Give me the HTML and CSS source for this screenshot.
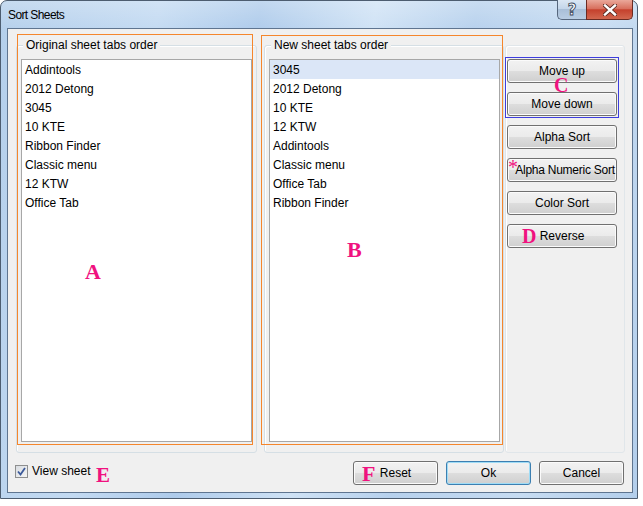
FILE: index.html
```html
<!DOCTYPE html>
<html lang="en">
<head>
    <meta charset="UTF-8">
    <meta name="viewport" content="width=device-width, initial-scale=1.0">
    <title>Sort Sheets</title>
    <link rel="stylesheet" href="styles.css">
</head>
<body>

    <div class="window">
        <div class="titlebar">
            <span class="title">Sort Sheets</span>
            <div class="caption-buttons">
                <span class="cap-btn help">?</span>
                <span class="cap-btn close">
                    <svg width="14" height="12" viewBox="0 0 14 12">
                        <path d="M2 1.5 L12 10.5 M12 1.5 L2 10.5" stroke="#5a2a22" stroke-width="4.2" stroke-linecap="square"/>
                        <path d="M2 1.5 L12 10.5 M12 1.5 L2 10.5" stroke="#fff" stroke-width="2.4" stroke-linecap="square"/>
                    </svg>
                </span>
            </div>
        </div>

        <div class="client">
            <div class="groups">
                <div class="group group-a">
                    <span class="group-label">Original sheet tabs order</span>
                    <ul class="listbox">
                        <li>Addintools</li>
                        <li>2012 Detong</li>
                        <li>3045</li>
                        <li>10 KTE</li>
                        <li>Ribbon Finder</li>
                        <li>Classic menu</li>
                        <li>12 KTW</li>
                        <li>Office Tab</li>
                    </ul>
                </div>

                <div class="group group-b">
                    <span class="group-label">New sheet tabs order</span>
                    <ul class="listbox">
                        <li class="selected">3045</li>
                        <li>2012 Detong</li>
                        <li>10 KTE</li>
                        <li>12 KTW</li>
                        <li>Addintools</li>
                        <li>Classic menu</li>
                        <li>Office Tab</li>
                        <li>Ribbon Finder</li>
                    </ul>
                </div>

                <div class="group group-c">
                    <div class="move-pair">
                        <button class="btn side">Move up</button>
                        <button class="btn side">Move down</button>
                    </div>
                    <button class="btn side">Alpha Sort</button>
                    <button class="btn side tight">Alpha Numeric Sort</button>
                    <button class="btn side">Color Sort</button>
                    <button class="btn side">Reverse</button>
                </div>
            </div>

            <div class="bottom-row">
                <label class="check">
                    <span class="checkbox">
                        <svg width="9" height="9" viewBox="0 0 9 9">
                            <path d="M1 4.5 L3.5 7.5 L8 1" fill="none" stroke="#3c5a9a" stroke-width="1.8"/>
                        </svg>
                    </span>
                    View sheet
                </label>
                <div class="dialog-buttons">
                    <button class="btn wide">Reset</button>
                    <button class="btn wide default">Ok</button>
                    <button class="btn wide">Cancel</button>
                </div>
            </div>

            <!-- annotations drawn over the dialog -->
            <div class="mark mark-a"></div>
            <div class="mark mark-b"></div>
            <span class="tag tag-a">A</span>
            <span class="tag tag-b">B</span>
            <span class="tag tag-c">C</span>
            <span class="tag tag-d">D</span>
            <span class="tag tag-e">E</span>
            <span class="tag tag-f">F</span>
            <span class="tag star">*</span>
        </div>
    </div>

</body>
</html>
```

FILE: styles.css
```css
body {
    margin: 0;
    background-color: #fff;
    font-family: "Liberation Sans", Arial, sans-serif;
    font-size: 12px;
    color: #000;
}

.window {
    box-sizing: border-box;
    width: 638px;
    height: 499px;
    padding: 0 4px 5px 6px;
    border: 1px solid #4d5d70;
    border-radius: 7px 7px 0 0;
    display: flex;
    flex-direction: column;
    background:
        linear-gradient(180deg, rgba(255,255,255,0.25) 0%, rgba(255,255,255,0) 30px),
        linear-gradient(100deg, #b4cfeb 0%, #c3daf2 22%, #aecbeb 36%, #cfe2f5 52%, #b7d1ed 66%, #c7dcf2 84%, #b3ceeb 100%);
}

.titlebar {
    height: 27px;
    display: flex;
    justify-content: space-between;
    align-items: flex-start;
    padding-left: 1px;
}

.title {
    margin-top: 7px;
    font-size: 12px;
    letter-spacing: -0.6px;
    color: #000;
}

.caption-buttons {
    display: flex;
    margin-top: -1px;
}

.cap-btn {
    box-sizing: border-box;
    height: 20px;
    display: flex;
    align-items: center;
    justify-content: center;
    border: 1px solid #56677d;
    border-top: none;
}

.help {
    width: 29px;
    border-right: none;
    border-radius: 0 0 0 5px;
    background: linear-gradient(180deg, #dbe7f4 0%, #c4d6ea 45%, #a9bfd8 50%, #b9cde3 100%);
    font-family: "DejaVu Sans", sans-serif;
    font-weight: bold;
    font-size: 15px;
    color: #fff;
    -webkit-text-stroke: 0.9px #3c4a5c;
}

.close {
    width: 47px;
    border-radius: 0 0 5px 0;
    border-color: #6b2b22;
    background: linear-gradient(180deg, #eaa89a 0%, #d8705e 45%, #c5412d 52%, #d2674f 100%);
}

.client {
    position: relative;
    flex: 1;
    border: 1px solid #5f7590;
    background-color: #f0f0f0;
    padding: 16px 7px 0 8px;
    display: flex;
    flex-direction: column;
}

.groups {
    display: flex;
    height: 408px;
}

.group {
    position: relative;
    box-sizing: border-box;
    height: 408px;
    border: 1px solid #d5dfe5;
    border-radius: 3px;
    box-shadow: inset 1px 1px 0 #fff;
    padding: 13px 4px 10px 4px;
    display: flex;
}

.group-a {
    width: 241px;
}

.group-b {
    width: 240px;
    margin-left: 7px;
    padding-right: 3px;
}

.group-c {
    width: 120px;
    margin-left: 1px;
    padding: 13px 0 0 1px;
    flex-direction: column;
    gap: 9px;
    border-color: #e0e6ea;
}

.group-label {
    position: absolute;
    top: -8px;
    left: 6px;
    padding: 0 3px;
    background-color: #f0f0f0;
    line-height: 14px;
}

.listbox {
    flex: 1;
    margin: 0;
    padding: 0;
    list-style: none;
    background-color: #fff;
    border: 1px solid #a7a7a7;
}

.listbox li {
    box-sizing: border-box;
    height: 19px;
    padding: 2px 0 0 3px;
    line-height: 17px;
}

.listbox li.selected {
    background-color: #dbe6f7;
}

.move-pair {
    display: flex;
    flex-direction: column;
    gap: 9px;
    width: 110px;
    outline: 1px solid #3d3ddd;
    outline-offset: 1px;
}

.btn {
    box-sizing: border-box;
    height: 24px;
    padding: 0;
    border: 1px solid #707070;
    border-radius: 3px;
    background: linear-gradient(180deg, #f2f2f2 0%, #ebebeb 48%, #dddddd 52%, #cfcfcf 100%);
    box-shadow: inset 0 0 0 1px #fbfbfb;
    font-family: "Liberation Sans", Arial, sans-serif;
    font-size: 12px;
    color: #000;
    white-space: nowrap;
    overflow: visible;
}

.side {
    width: 110px;
}

.tight {
    letter-spacing: -0.25px;
    padding-left: 6px;
}

.bottom-row {
    flex: 1;
    display: flex;
    align-items: flex-start;
    padding-top: 8px;
}

.check {
    display: flex;
    align-items: center;
    gap: 4px;
    margin-top: 3px;
    margin-left: -1px;
}

.checkbox {
    box-sizing: border-box;
    width: 13px;
    height: 13px;
    border: 1px solid #8e8f8f;
    background: linear-gradient(135deg, #d9dde2 0%, #f4f4f4 100%);
    display: flex;
    align-items: center;
    justify-content: center;
}

.dialog-buttons {
    margin-left: auto;
    display: flex;
    gap: 8px;
    margin-right: 1px;
}

.wide {
    width: 85px;
}

.default {
    border-color: #3c7fb1;
    box-shadow: inset 0 0 0 1px #9fdcf6;
}

.mark {
    position: absolute;
    box-sizing: border-box;
    border: 1px solid #f5862c;
}

.mark-a {
    left: 9px;
    top: 5px;
    width: 236px;
    height: 411px;
}

.mark-b {
    left: 253px;
    top: 6px;
    width: 242px;
    height: 410px;
}

.tag {
    position: absolute;
    font-family: "Liberation Serif", "Times New Roman", serif;
    font-weight: bold;
    font-size: 22px;
    line-height: 1;
    color: #f0127f;
}

.tag-a { left: 77px; top: 232px; }
.tag-b { left: 339px; top: 210px; }
.tag-c { left: 546px; top: 46px; font-size: 20px; }
.tag-d { left: 514px; top: 197px; font-size: 20px; }
.tag-e { left: 88px; top: 436px; font-size: 21px; }
.tag-f { left: 354px; top: 434px; }
.star { left: 500px; top: 128px; font-size: 20px; font-weight: normal; }
```
